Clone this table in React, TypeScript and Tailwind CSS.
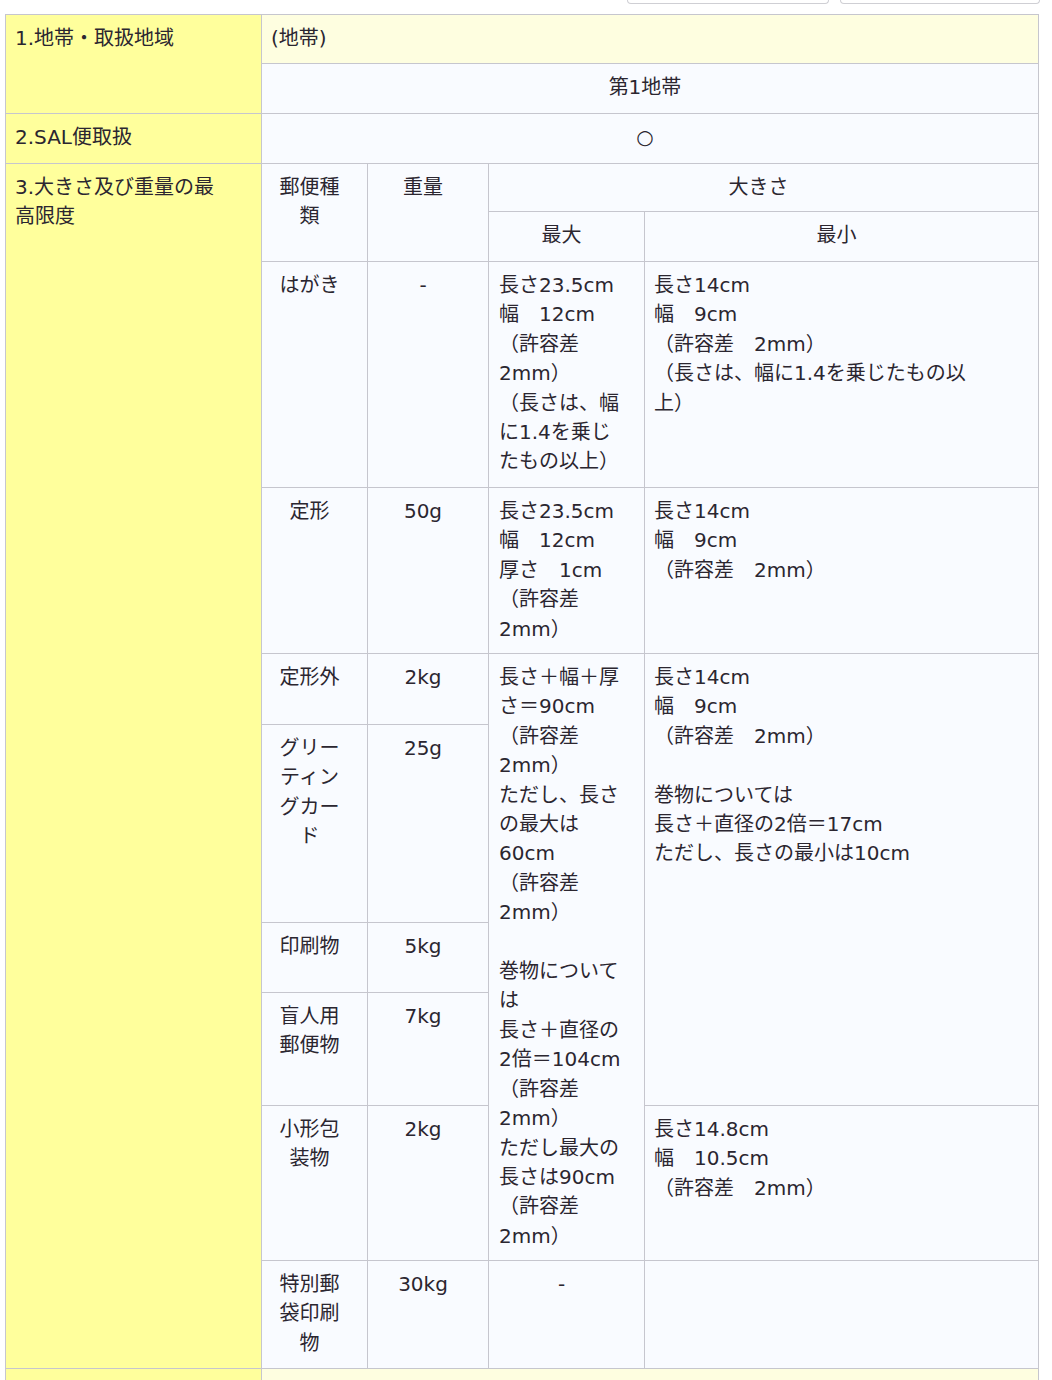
import React from "react";

type CellProps = {
    className?: string
    lines: string[]
    center?: boolean
}

// one grid cell, every line written out so the wrapping matches
function Cell({className, lines, center}: CellProps) {
    const pad = center ? "pl-[5px] pr-[15px] text-center" : "pl-[9px] pr-[10px]"
    return (
        <div className={`pt-[9px] pb-[6px] ${pad} ${className ?? ""}`}>
            {lines.map((l, i) => (
                <div key={i} className="whitespace-nowrap">{l === "" ? "\u00a0" : l}</div>
            ))}
        </div>
    )
}

const yellow = "bg-[#ffff9c]"
const pale = "bg-[#fefee0]"
const white = "bg-[#f9fbff]"

export default function App() {
    return (
        <div className="min-h-screen bg-white font-['DejaVu_Sans','Noto_Sans_CJK_JP',sans-serif] text-[20px] leading-[29.4px] text-[#2b2630]">
            <div className="flex h-[4px] gap-[11px] pl-[627px]">
                <div className="w-[202px] rounded-b-[6px] border border-t-0 border-[#cfcfd4]"></div>
                <div className="w-[200px] rounded-b-[6px] border border-t-0 border-[#cfcfd4]"></div>
            </div>

            <div className="mt-[10px] pl-[5px]">
                <div className="grid w-[1034px] grid-cols-[255px_105px_120px_155px_393px] grid-rows-[48px_49px_49px_47px_49px_225px_165px_70px_197px_69px_112px_154px_107px_48px] gap-px bg-[#c6c6ce] p-px">
                    {/* 1 */}
                    <Cell className={`${yellow} col-start-1 row-start-1 row-span-2`} lines={["1.地帯・取扱地域"]} />
                    <Cell className={`${pale} col-start-2 col-span-4 row-start-1`} lines={["(地帯)"]} />
                    <Cell center className={`${white} col-start-2 col-span-4 row-start-2`} lines={["第1地帯"]} />

                    {/* 2 */}
                    <Cell className={`${yellow} col-start-1 row-start-3`} lines={["2.SAL便取扱"]} />
                    <Cell center className={`${white} col-start-2 col-span-4 row-start-3`} lines={["○"]} />

                    {/* 3 */}
                    <Cell className={`${yellow} col-start-1 row-start-4 row-span-10`} lines={["3.大きさ及び重量の最", "高限度"]} />
                    <Cell center className={`${white} col-start-2 row-start-4 row-span-2`} lines={["郵便種", "類"]} />
                    <Cell center className={`${white} col-start-3 row-start-4 row-span-2`} lines={["重量"]} />
                    <Cell center className={`${white} col-start-4 col-span-2 row-start-4`} lines={["大きさ"]} />
                    <Cell center className={`${white} col-start-4 row-start-5`} lines={["最大"]} />
                    <Cell center className={`${white} col-start-5 row-start-5`} lines={["最小"]} />

                    {/* はがき */}
                    <Cell center className={`${white} col-start-2 row-start-6`} lines={["はがき"]} />
                    <Cell center className={`${white} col-start-3 row-start-6`} lines={["-"]} />
                    <Cell className={`${white} col-start-4 row-start-6 pl-[10px]`} lines={["長さ23.5cm", "幅　12cm", "（許容差", "2mm）", "（長さは、幅", "に1.4を乗じ", "たもの以上）"]} />
                    <Cell className={`${white} col-start-5 row-start-6`} lines={["長さ14cm", "幅　9cm", "（許容差　2mm）", "（長さは、幅に1.4を乗じたもの以", "上）"]} />

                    {/* 定形 */}
                    <Cell center className={`${white} col-start-2 row-start-7`} lines={["定形"]} />
                    <Cell center className={`${white} col-start-3 row-start-7`} lines={["50g"]} />
                    <Cell className={`${white} col-start-4 row-start-7 pl-[10px]`} lines={["長さ23.5cm", "幅　12cm", "厚さ　1cm", "（許容差", "2mm）"]} />
                    <Cell className={`${white} col-start-5 row-start-7`} lines={["長さ14cm", "幅　9cm", "（許容差　2mm）"]} />

                    {/* 定形外 .. 小形包装物 */}
                    <Cell center className={`${white} col-start-2 row-start-8`} lines={["定形外"]} />
                    <Cell center className={`${white} col-start-3 row-start-8`} lines={["2kg"]} />
                    <Cell
                        className={`${white} col-start-4 row-start-8 row-span-5 pl-[10px]`}
                        lines={["長さ＋幅＋厚", "さ＝90cm", "（許容差", "2mm）", "ただし、長さ", "の最大は", "60cm", "（許容差", "2mm）", "", "巻物について", "は", "長さ＋直径の", "2倍＝104cm", "（許容差", "2mm）", "ただし最大の", "長さは90cm", "（許容差", "2mm）"]}
                    />
                    <Cell
                        className={`${white} col-start-5 row-start-8 row-span-4`}
                        lines={["長さ14cm", "幅　9cm", "（許容差　2mm）", "", "巻物については", "長さ＋直径の2倍＝17cm", "ただし、長さの最小は10cm"]}
                    />

                    <Cell center className={`${white} col-start-2 row-start-9`} lines={["グリー", "ティン", "グカー", "ド"]} />
                    <Cell center className={`${white} col-start-3 row-start-9`} lines={["25g"]} />

                    <Cell center className={`${white} col-start-2 row-start-10`} lines={["印刷物"]} />
                    <Cell center className={`${white} col-start-3 row-start-10`} lines={["5kg"]} />

                    <Cell center className={`${white} col-start-2 row-start-11`} lines={["盲人用", "郵便物"]} />
                    <Cell center className={`${white} col-start-3 row-start-11`} lines={["7kg"]} />

                    <Cell center className={`${white} col-start-2 row-start-12`} lines={["小形包", "装物"]} />
                    <Cell center className={`${white} col-start-3 row-start-12`} lines={["2kg"]} />
                    <Cell className={`${white} col-start-5 row-start-12`} lines={["長さ14.8cm", "幅　10.5cm", "（許容差　2mm）"]} />

                    {/* 特別郵袋印刷物 */}
                    <Cell center className={`${white} col-start-2 row-start-13`} lines={["特別郵", "袋印刷", "物"]} />
                    <Cell center className={`${white} col-start-3 row-start-13`} lines={["30kg"]} />
                    <Cell center className={`${white} col-start-4 row-start-13`} lines={["-"]} />
                    <Cell className={`${white} col-start-5 row-start-13`} lines={[""]} />

                    {/* next item, cut off by the screen */}
                    <Cell className={`${yellow} col-start-1 row-start-14`} lines={[""]} />
                    <Cell className={`${pale} col-start-2 col-span-4 row-start-14`} lines={[""]} />
                </div>
            </div>
        </div>
    )
}
